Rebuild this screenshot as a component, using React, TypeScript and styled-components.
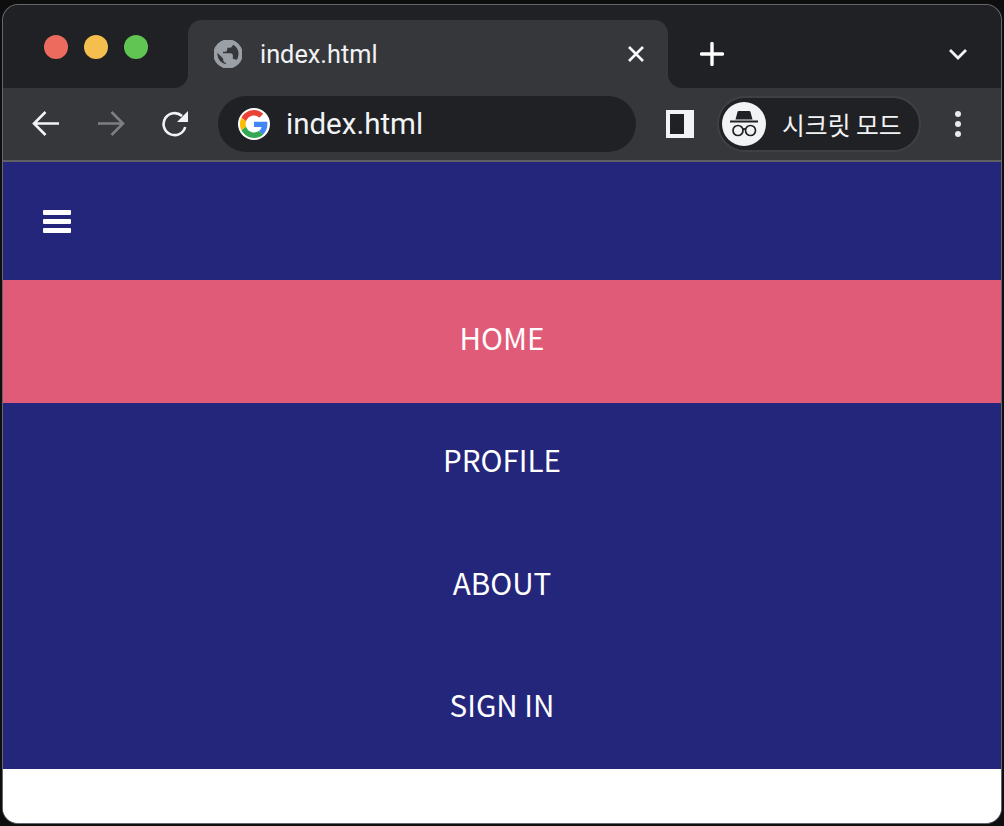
import { createGlobalStyle, styled } from "styled-components";

const GlobalStyle = createGlobalStyle`
  html, body {
    margin: 0;
    padding: 0;
    height: 826px;
    overflow: hidden;
    background: #0e0e0f;
  }
  * {
    box-sizing: border-box;
  }
`;

const Frame = styled.div`
  width: 1004px;
  height: 826px;
  padding: 5px 3px 3px 3px;
`;

const Window = styled.div`
  height: 818px;
  display: flex;
  flex-direction: column;
  overflow: hidden;
  border-radius: 15px;
  background: #fff;
  box-shadow: 0 0 0 1px #66676f;
  font-family: "Roboto", "Noto Sans", sans-serif;
`;

const TabStrip = styled.div`
  height: 83px;
  flex: none;
  display: flex;
  background: linear-gradient(#202124 30px, #36373b 30px);
`;

const StripCorner = styled.div`
  width: 185px;
  flex: none;
  display: flex;
  gap: 16px;
  padding: 30px 0 0 41px;
  background: #202124;
  border-bottom-right-radius: 14px;
`;

const TrafficLight = styled.span<{ $color: string }>`
  width: 24px;
  height: 24px;
  border-radius: 50%;
  background: ${(p) => p.$color};
`;

const ActiveTab = styled.div`
  width: 480px;
  flex: none;
  margin-top: 15px;
  display: flex;
  align-items: center;
  padding: 0 23px 0 26px;
  color: #f1f3f4;
  font-size: 25.3px;
  background: #36373b;
  border-radius: 14px 14px 0 0;
`;

const TabTitle = styled.span`
  flex: 1;
  margin-left: 18px;
`;

const StripRest = styled.div`
  flex: 1;
  display: flex;
  align-items: center;
  justify-content: space-between;
  padding: 15px 33px 0 32px;
  background: #202124;
  border-bottom-left-radius: 14px;
`;

const Toolbar = styled.div`
  height: 74px;
  flex: none;
  display: flex;
  align-items: center;
  padding: 0 0 0 29px;
  background: #36373b;
  border-bottom: 2px solid #5f6063;
`;

const NavIcons = styled.div`
  display: flex;
  align-items: center;
  gap: 37px;
`;

const Omnibox = styled.div`
  width: 418px;
  height: 56px;
  margin-left: 28px;
  display: flex;
  align-items: center;
  gap: 16px;
  padding-left: 20px;
  color: #f1f3f4;
  font-size: 29.5px;
  background: #202124;
  border-radius: 28px;
`;

const GoogleBadge = styled.span`
  width: 32px;
  height: 32px;
  display: flex;
  align-items: center;
  justify-content: center;
  background: #fff;
  border-radius: 50%;
`;

const SidePanelIcon = styled.span`
  width: 28px;
  height: 28px;
  margin-left: 30px;
  border: 4px solid #f1f3f4;
  border-right-width: 10px;
  background: #202124;
`;

const IncognitoChip = styled.div`
  width: 204px;
  height: 56px;
  margin-left: 23px;
  display: flex;
  align-items: center;
  gap: 16px;
  padding-left: 3px;
  color: #f1f3f4;
  font-family: "Noto Sans CJK KR", sans-serif;
  font-size: 24.8px;
  white-space: nowrap;
  background: #202124;
  border: 2px solid #3f4044;
  border-radius: 28px;
`;

const IncognitoBadge = styled.span`
  width: 44px;
  height: 44px;
  flex: none;
  display: flex;
  align-items: center;
  justify-content: center;
  background: #f1f3f4;
  border-radius: 50%;
`;

const MenuDots = styled.div`
  margin-left: 34px;
  display: flex;
  flex-direction: column;
  gap: 4px;
`;

const MenuDot = styled.span`
  width: 6px;
  height: 6px;
  border-radius: 50%;
  background: #e8eaed;
`;

const Page = styled.main`
  flex: 1;
  background: #fff;
`;

const Navbar = styled.nav`
  background: #24267c;
  font-family: "Noto Sans CJK KR", "Noto Sans", sans-serif;
`;

const NavHeader = styled.div`
  height: 118.4px;
  display: flex;
  align-items: center;
  padding-left: 40px;
`;

const HamburgerIcon = styled.div`
  width: 28px;
  display: flex;
  flex-direction: column;
  gap: 4px;
`;

const HamburgerBar = styled.span`
  height: 5px;
  background: #fff;
  border-radius: 1px;
`;

const NavItem = styled.a<{ $active?: boolean }>`
  height: 122.25px;
  display: flex;
  align-items: center;
  justify-content: center;
  padding-bottom: 8px;
  color: #fff;
  font-size: 29.6px;
  background: ${(p) => (p.$active ? "#e05b77" : "transparent")};
`;

const GlobeIcon = () => (
  <svg width="28" height="28" viewBox="2 2 20 20">
    <circle cx="12" cy="12" r="10" fill="#36373b" />
    <path
      fillRule="evenodd"
      d="M12 2C6.480 2 2 6.480 2 12s4.480 10 10 10 10-4.480 10-10S17.520 2 12 2zm-1 17.930c-3.950-.490-7-3.850-7-7.930 0-.620.080-1.210.210-1.790L9 15v1c0 1.100.900 2 2 2v1.930zm6.900-2.540c-.260-.810-1-1.390-1.900-1.390h-1v-3c0-.550-.450-1-1-1H8v-2h2c.550 0 1-.450 1-1V7h2c1.100 0 2-.900 2-2v-.410c2.930 1.190 5 4.060 5 7.410 0 2.080-.800 3.970-2.100 5.390z"
      fill="#9aa0a6"
      stroke="#9aa0a6"
      strokeWidth="0.9"
    />
  </svg>
);

const GoogleIcon = () => (
  <svg width="28" height="28" viewBox="0 0 48 48">
    <path fill="#ea4335" d="M24 9.500c3.500 0 6.600 1.200 9.100 3.600l6.800-6.800C35.800 2.500 30.400 0 24 0 14.600 0 6.500 5.400 2.600 13.200l7.900 6.200C12.400 13.600 17.700 9.500 24 9.500z" />
    <path fill="#4285f4" d="M47 24.500c0-1.600-.1-3.100-.4-4.500H24v9h12.900c-.6 3-2.200 5.500-4.700 7.200l7.300 5.700C43.900 37.900 47 31.800 47 24.500z" />
    <path fill="#fbbc05" d="M10.500 28.600c-.5-1.400-.8-3-.8-4.600s.3-3.200.8-4.600l-7.900-6.200C.900 16.500 0 20.100 0 24s.9 7.500 2.600 10.800l7.900-6.200z" />
    <path fill="#34a853" d="M24 48c6.500 0 11.900-2.100 15.900-5.800l-7.700-6c-2.100 1.400-4.900 2.300-8.200 2.300-6.300 0-11.600-4.100-13.500-9.900l-7.900 6.200C6.500 42.600 14.600 48 24 48z" />
  </svg>
);

const CloseIcon = () => (
  <svg width="18" height="18" viewBox="0 0 18 18">
    <path d="M2 2l14 14M16 2L2 16" stroke="#f8f9fa" strokeWidth="2.600" fill="none" />
  </svg>
);

const PlusIcon = () => (
  <svg width="24" height="24" viewBox="0 0 24 24">
    <path d="M12 1.500v21M1.500 12h21" stroke="#fff" strokeWidth="3.400" strokeLinecap="round" fill="none" />
  </svg>
);

const ChevronIcon = () => (
  <svg width="20" height="12" viewBox="0 0 20 12">
    <path d="M2 2l8 8 8-8" stroke="#f1f3f4" strokeWidth="2.800" fill="none" />
  </svg>
);

const ArrowIcon = ({ flip, color }: { flip?: boolean; color: string }) => (
  <svg width="28" height="28" viewBox="0 0 28 28" style={flip ? { transform: "scaleX(-1)" } : undefined}>
    <path d="M27 13.500H3M13.500 2L2 13.500 13.500 25" stroke={color} strokeWidth="2.600" fill="none" />
  </svg>
);

const ReloadIcon = () => (
  <svg width="28" height="28" viewBox="0 0 28 28">
    <path d="M23.200 17A11 11 0 1 1 20 6" stroke="#f1f3f4" strokeWidth="2.600" fill="none" />
    <path d="M26 1v11H15z" fill="#f1f3f4" />
  </svg>
);

const IncognitoIcon = () => (
  <svg width="28" height="26" viewBox="0 0 28 26">
    <path d="M5.500 8.500L7.500 1c.2-.7.800-1 1.500-1h10c.7 0 1.300.3 1.500 1l2 7.500z" fill="#202124" />
    <path d="M0 10.500h28" stroke="#202124" strokeWidth="2" />
    <circle cx="8" cy="19.500" r="5" stroke="#202124" strokeWidth="1.700" fill="none" />
    <circle cx="20.500" cy="19.500" r="5" stroke="#202124" strokeWidth="1.700" fill="none" />
    <path d="M12.500 18.500c1-.6 2.500-.6 3.500 0" stroke="#202124" strokeWidth="1.700" fill="none" />
  </svg>
);

const items = ["HOME", "PROFILE", "ABOUT", "SIGN IN"];

export default function App() {
  return (
    <>
      <GlobalStyle />
      <Frame>
        <Window>
          <TabStrip>
            <StripCorner>
              <TrafficLight $color="#ec6a5e" />
              <TrafficLight $color="#f4bf4f" />
              <TrafficLight $color="#61c554" />
            </StripCorner>
            <ActiveTab>
              <GlobeIcon />
              <TabTitle>index.html</TabTitle>
              <CloseIcon />
            </ActiveTab>
            <StripRest>
              <PlusIcon />
              <ChevronIcon />
            </StripRest>
          </TabStrip>
          <Toolbar>
            <NavIcons>
              <ArrowIcon color="#f1f3f4" />
              <ArrowIcon flip color="#7e7f82" />
              <ReloadIcon />
            </NavIcons>
            <Omnibox>
              <GoogleBadge>
                <GoogleIcon />
              </GoogleBadge>
              index.html
            </Omnibox>
            <SidePanelIcon />
            <IncognitoChip>
              <IncognitoBadge>
                <IncognitoIcon />
              </IncognitoBadge>
              시크릿 모드
            </IncognitoChip>
            <MenuDots>
              <MenuDot />
              <MenuDot />
              <MenuDot />
            </MenuDots>
          </Toolbar>
          <Page>
            <Navbar>
              <NavHeader>
                <HamburgerIcon>
                  <HamburgerBar />
                  <HamburgerBar />
                  <HamburgerBar />
                </HamburgerIcon>
              </NavHeader>
              {items.map((item, i) => (
                <NavItem key={item} $active={i === 0}>
                  {item}
                </NavItem>
              ))}
            </Navbar>
          </Page>
        </Window>
      </Frame>
    </>
  );
}
